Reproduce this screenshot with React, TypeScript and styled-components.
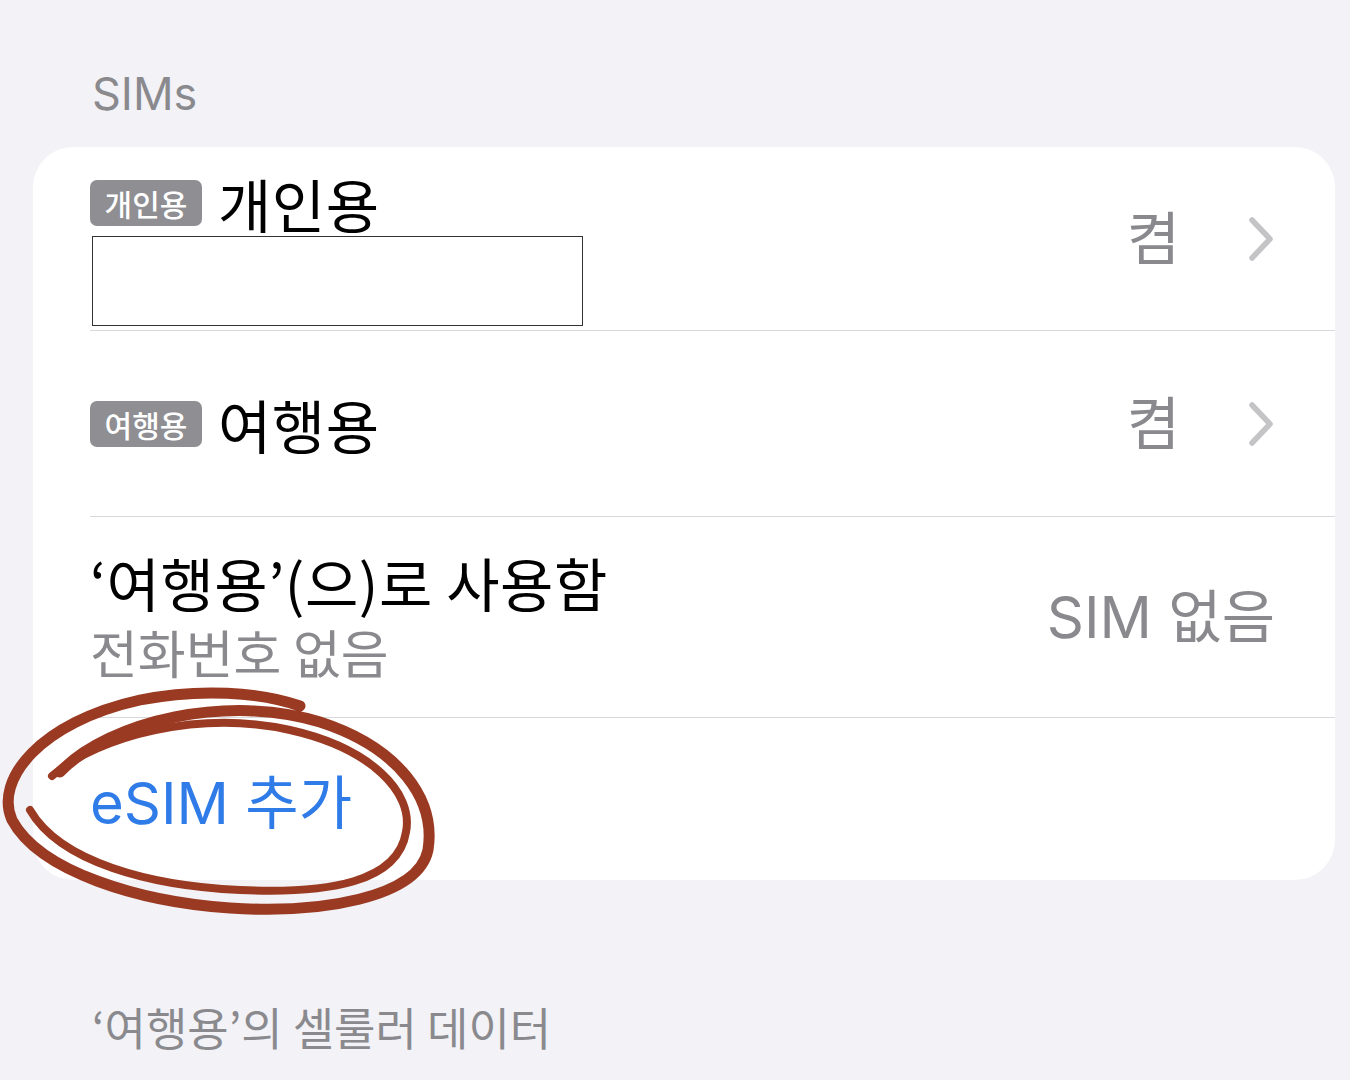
import React from "react";
import styled, { createGlobalStyle } from "styled-components";

const GlobalStyle = createGlobalStyle`
  html, body {
    margin: 0;
    padding: 0;
    background: #f2f2f7;
  }
  body {
    font-family: Inter, "Noto Sans CJK KR", sans-serif;
    -webkit-font-smoothing: antialiased;
  }
`;

const Page = styled.div`
  position: relative;
  width: 1350px;
  height: 1080px;
  overflow: hidden;
  padding: 0 15px 0 33px;
  box-sizing: border-box;
`;

const SectionHeader = styled.div`
  color: #8a8a8e;
  font-size: 45px;
  line-height: 1;
  padding: 71px 0 0 59px;
  height: 147px;
  box-sizing: border-box;
`;

const Card = styled.div`
  background: #ffffff;
  border-radius: 40px;
  overflow: hidden;
`;

const Row = styled.div<{ $h: number; $last?: boolean }>`
  height: ${(p) => p.$h}px;
  margin-left: 57px;
  padding-right: 60px;
  display: flex;
  align-items: center;
  justify-content: space-between;
  border-bottom: ${(p) => (p.$last ? "none" : "1.5px solid #d9d9dd")};
  box-sizing: border-box;
`;

const Left = styled.div<{ $pad?: number }>`
  display: flex;
  flex-direction: column;
  padding-top: ${(p) => p.$pad ?? 0}px;
`;

const TitleLine = styled.div`
  display: flex;
  align-items: center;
  gap: 16px;
  height: 62px;
`;

const Badge = styled.span`
  display: inline-flex;
  align-items: center;
  justify-content: center;
  height: 46px;
  min-width: 112px;
  padding: 0 13px;
  box-sizing: border-box;
  border-radius: 7px;
  background: #8e8e93;
  color: #ffffff;
  font-size: 30px;
  font-weight: 500;
  font-family: "Noto Sans CJK KR", sans-serif;
`;

const Title = styled.span`
  color: #000;
  font-size: 58px;
  line-height: 62px;
  letter-spacing: 0.5px;
  font-family: "Noto Sans CJK KR", sans-serif;
`;

const Subtitle = styled.span`
  color: #8a8a8e;
  font-size: 52px;
  line-height: 62px;
  margin-top: 8px;
  font-family: "Noto Sans CJK KR", sans-serif;
`;

const Redacted = styled.div`
  width: 489px;
  height: 88px;
  margin: 2px 0 0 2px;
  border: 1.5px solid #333;
  background: #fff;
`;

const Right = styled.div`
  display: flex;
  align-items: center;
  gap: 67px;
  color: #8a8a8e;
  font-size: 58px;
`;

const Value = styled.span`
  font-family: Inter, "Noto Sans CJK KR", sans-serif;
  line-height: 1;
`;

const Action = styled.span`
  color: #2f7be8;
  font-size: 58px;
`;

const Footer = styled.div`
  color: #8a8a8e;
  font-size: 45px;
  padding: 114px 0 0 59px;
  font-family: "Noto Sans CJK KR", sans-serif;
`;

const Annotation = styled.svg`
  position: absolute;
  left: 0;
  top: 680px;
  pointer-events: none;
`;

const Chevron = () => (
  <svg width="28" height="46" viewBox="0 0 28 46">
    <path
      d="M5 4 L23 23 L5 42"
      fill="none"
      stroke="#c4c4c7"
      strokeWidth="5.5"
      strokeLinecap="round"
      strokeLinejoin="round"
    />
  </svg>
);

export default function App() {
  return (
    <>
      <GlobalStyle />
      <Page>
        <SectionHeader>SIMs</SectionHeader>
        <Card>
          <Row $h={184}>
            <Left $pad={21}>
              <TitleLine>
                <Badge>개인용</Badge>
                <Title>개인용</Title>
              </TitleLine>
              <Redacted />
            </Left>
            <Right>
              <Value>켬</Value>
              <Chevron />
            </Right>
          </Row>
          <Row $h={186}>
            <TitleLine>
              <Badge>여행용</Badge>
              <Title>여행용</Title>
            </TitleLine>
            <Right>
              <Value>켬</Value>
              <Chevron />
            </Right>
          </Row>
          <Row $h={201}>
            <Left>
              <Title>‘여행용’(으)로 사용함</Title>
              <Subtitle>전화번호 없음</Subtitle>
            </Left>
            <Right>
              <Value>SIM 없음</Value>
            </Right>
          </Row>
          <Row $h={162} $last>
            <Action>eSIM 추가</Action>
          </Row>
        </Card>
        <Footer>‘여행용’의 셀룰러 데이터</Footer>
        <Annotation width="460" height="250" viewBox="0 0 460 250">
          <g fill="none" stroke="#9b3a22" strokeLinecap="round">
            <path
              strokeWidth="11"
              d="M60 92 C110 40, 230 14, 320 42 C400 68, 436 120, 428 170 C418 218, 320 234, 230 228 C140 222, 40 192, 12 140 C-6 100, 40 42, 140 20 C200 8, 260 12, 300 26"
            />
            <path
              strokeWidth="8"
              d="M52 96 C100 55, 200 30, 290 50 C370 68, 414 112, 406 152 C398 202, 330 214, 240 210 C150 206, 60 182, 30 130"
            />
          </g>
        </Annotation>
      </Page>
    </>
  );
}
